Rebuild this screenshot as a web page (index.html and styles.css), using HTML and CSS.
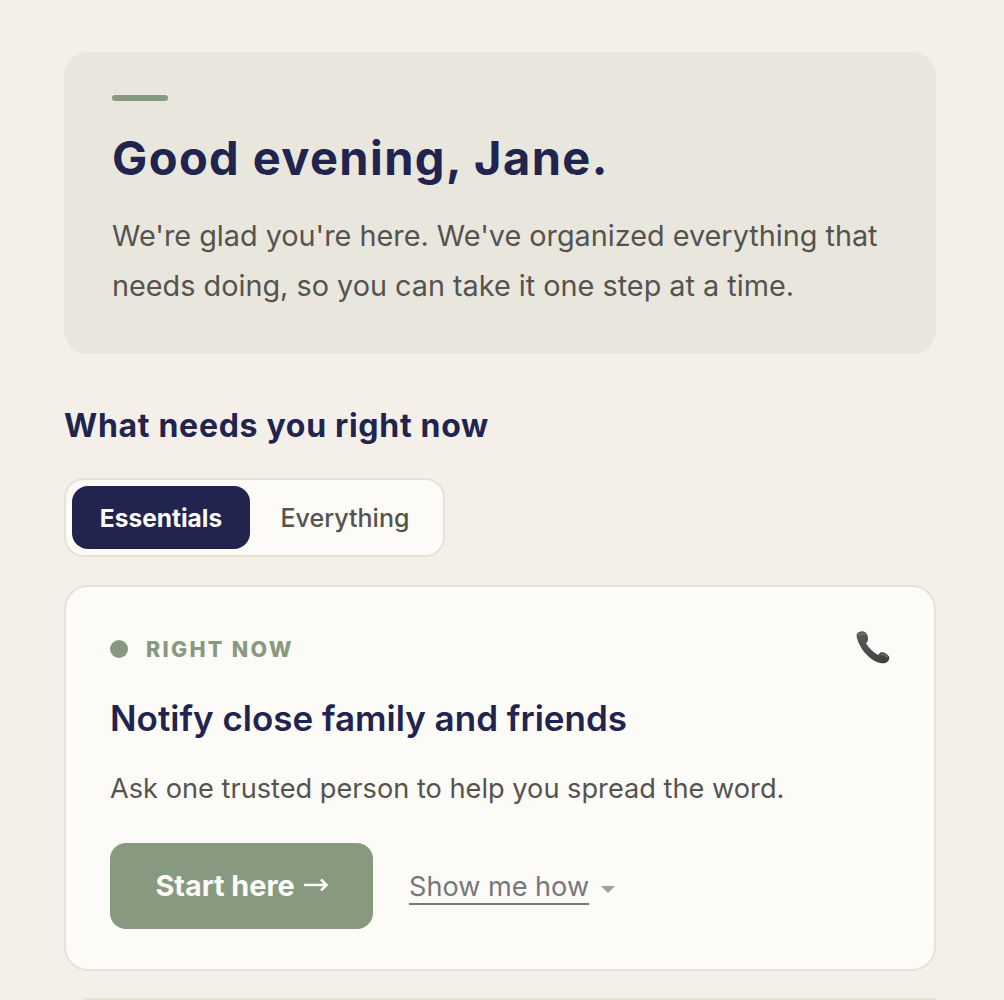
FILE: index.html
```html
<!DOCTYPE html>
<html lang="en">
<head>
<meta charset="utf-8">
<title>Home</title>
<link rel="stylesheet" href="styles.css">
</head>
<body>
<main class="page">
  <section class="hero">
    <div class="accent"></div>
    <h1>Good evening, Jane.</h1>
    <p>We're glad you're here. We've organized everything that needs doing, so you can take it one step at a time.</p>
  </section>
  <h2>What needs you right now</h2>
  <div class="toggle">
    <span class="tab active">Essentials</span>
    <span class="tab">Everything</span>
  </div>
  <article class="card">
    <div class="card-top">
      <div class="label"><span class="dot"></span>RIGHT NOW</div>
      <svg class="phone" viewBox="0 0 36 36" width="36" height="36" aria-hidden="true">
        <defs>
          <linearGradient id="handset" x1="0" y1="0" x2="1" y2="1">
            <stop offset="0" stop-color="#5a5a5d"/>
            <stop offset="1" stop-color="#3f3f42"/>
          </linearGradient>
        </defs>
        <path d="M2.500 5C3.500 2 8 0 11.500 2.500C13.500 4 14.500 8 14 10C13.800 11.500 12.500 12.500 12 13.300C15 18 19 22.500 24.300 25C25 24 26 22.500 27.700 22.300C30 22 34 24.500 35.200 27C35.800 29 34 32 31.500 33C27 34.500 19 31 14 26C8 20.500 3 12 2.500 5Z" fill="url(#handset)"/>
        <path d="M5 6C6 3.500 9 3 11 4.500M27 24.500C29.500 24 32 25.500 33.500 27.500" stroke="#77777a" stroke-width="1.200" fill="none"/>
      </svg>
    </div>
    <h3>Notify close family and friends</h3>
    <p class="desc">Ask one trusted person to help you spread the word.</p>
    <div class="actions">
      <button class="start">Start here
        <svg class="arrow" viewBox="0 0 24 14" width="24" height="14" aria-hidden="true">
          <path d="M0 7H22.500M17 1.500L22.500 7L17 12.500" fill="none" stroke="#fdfbf7" stroke-width="2.500"/>
        </svg>
      </button>
      <span class="how"><span class="how-link">Show me how</span><span class="caret"></span></span>
    </div>
  </article>
  <div class="next"></div>
</main>
</body>
</html>
```
FILE: styles.css
```css
* { box-sizing: border-box; }
html, body { margin: 0; height: 1000px; overflow: hidden; background: #f4f0e9; }
body { font-family: Inter, "Liberation Sans", sans-serif; color: #55534e; }
.page { padding: 52px 68px 0 64px; }
.hero { height: 302px; padding: 43px 48px 0; background: #e9e6de; border-radius: 24px; }
.accent { width: 56px; height: 6px; border-radius: 3px; background: #87997f; }
h1 { margin: 22px 0 0; font-size: 47px; line-height: 70px; font-weight: 700; color: #20244e; letter-spacing: 1.4px; }
.hero p { margin: 18px 0 0; font-size: 28.8px; line-height: 50px; color: #55534e; }
h2 { margin: 50px 0 0; font-size: 32px; line-height: 44px; font-weight: 700; color: #20244e; letter-spacing: 0.7px; }
.toggle { display: flex; margin-top: 30px; padding: 6px; height: 79px; width: 381px; background: #fdfbf7; border: 2px solid #e5e2d6; border-radius: 20px; }
.tab { display: flex; flex: none; align-items: center; justify-content: center; width: 186px; padding-left: 4px; font-size: 25px; font-weight: 500; color: #55534e; border-radius: 16px; }
.tab.active { width: 178px; padding-left: 0; background: #20244e; color: #fdfbf7; font-size: 24.5px; font-weight: 700; }
.card { margin-top: 28px; height: 386px; padding: 42px 44px 0; background: #fdfbf7; border: 2px solid #e5e2d6; border-radius: 24px; }
.card-top { display: flex; justify-content: space-between; align-items: flex-start; height: 40px; }
.label { display: flex; align-items: center; gap: 18px; height: 40px; font-size: 21.5px; font-weight: 800; letter-spacing: 2.3px; color: #87997f; }
.dot { width: 18px; height: 18px; border-radius: 50%; background: #87997f; }
.phone { margin-top: 1px; }
h3 { margin: 26px 0 0; font-size: 35px; line-height: 46px; font-weight: 600; color: #20244e; }
.desc { margin: 27px 0 0; font-size: 27.2px; line-height: 42px; color: #55534e; }
.actions { display: flex; align-items: center; gap: 36px; margin-top: 33px; }
.start { display: flex; align-items: center; justify-content: center; gap: 9px; width: 263px; height: 86px; padding: 0 0 2px; border: 0; border-radius: 16px; background: #87997f; color: #fdfbf7; font: 700 28.8px Inter, sans-serif; }
.arrow { flex: none; margin-top: -1px; }
.how { display: flex; align-items: center; gap: 12px; margin-top: 4px; font-size: 27.1px; color: #77767a; }
.how-link { border-bottom: 2px solid #77767a; line-height: 32px; }
.caret { width: 0; height: 0; border-left: 7px solid transparent; border-right: 7px solid transparent; border-top: 7px solid #a09f9f; margin-top: 2px; }
.next { margin: 27px 0 0 20px; height: 2px; background: #e5e2d6; }
```
